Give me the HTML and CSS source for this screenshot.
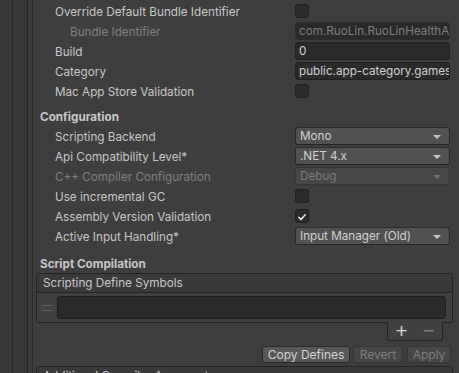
FILE: index.html
```html
<!doctype html>
<html>
<head>
  <title>Player Settings</title>
  <meta charset='UTF-8'>
  <link rel="stylesheet" href="styles.css">
</head>
<body>
  <div class="rail"></div>
  <div class="rail rail-inner"></div>
  <div class="gutter"></div>
  <main>
    <div class="row">
      <span class="label">Override Default Bundle Identifier</span>
      <span class="check"></span>
    </div>
    <div class="row">
      <span class="label sub off">Bundle Identifier</span>
      <span class="text off">com.RuoLin.RuoLinHealthApp</span>
    </div>
    <div class="row">
      <span class="label">Build</span>
      <span class="text">0</span>
    </div>
    <div class="row">
      <span class="label">Category</span>
      <span class="text">public.app-category.games</span>
    </div>
    <div class="row">
      <span class="label">Mac App Store Validation</span>
      <span class="check"></span>
    </div>

    <h3 class="first">Configuration</h3>
    <div class="row">
      <span class="label">Scripting Backend</span>
      <span class="drop">Mono</span>
    </div>
    <div class="row">
      <span class="label">Api Compatibility Level*</span>
      <span class="drop">.NET 4.x</span>
    </div>
    <div class="row">
      <span class="label off">C++ Compiler Configuration</span>
      <span class="drop off">Debug</span>
    </div>
    <div class="row">
      <span class="label">Use incremental GC</span>
      <span class="check"></span>
    </div>
    <div class="row">
      <span class="label">Assembly Version Validation</span>
      <span class="check on">
        <svg viewBox="0 0 14 14" width="14" height="14"><path d="M3.3 7.3 L5.9 9.8 L10.7 4.3" fill="none" stroke="#f0f0f0" stroke-width="1.7" stroke-linecap="round" stroke-linejoin="round"/></svg>
      </span>
    </div>
    <div class="row">
      <span class="label">Active Input Handling*</span>
      <span class="drop">Input Manager (Old)</span>
    </div>

    <h3>Script Compilation</h3>
    <div class="list">
      <div class="list-head">Scripting Define Symbols</div>
      <div class="list-body">
        <span class="handle"></span>
        <span class="list-input"></span>
      </div>
    </div>
    <div class="list-foot">
      <span class="plus">+</span>
      <span class="minus">&minus;</span>
    </div>
    <div class="actions">
      <span class="btn btn-copy">Copy Defines</span>
      <span class="btn btn-revert off">Revert</span>
      <span class="btn btn-apply off">Apply</span>
    </div>
    <div class="list next">
      <div class="list-head">Additional Compiler Arguments</div>
    </div>
  </main>
</body>
</html>
```

FILE: styles.css
```css
html, body { height: 100% }
body {
  margin: 0;
  display: flex;
  overflow: hidden;
  background: #383838;
  color: #c8c8c8;
  font: 11.7px/20px Inter, 'Noto Sans', sans-serif }
.rail {
  width: 12px;
  flex: none;
  border-right: 1px solid #242424 }
  .rail-inner { width: 14px }
.gutter {
  width: 4px;
  flex: none;
  background: #3c3c3c;
  border-right: 1px solid #2c2c2c }
main {
  flex: 1;
  background: #3e3e3e;
  padding: 1px 0 0 3px;
  min-width: 0 }
  .row {
    display: grid;
    grid-template-columns: 240px 155px;
    align-items: center;
    height: 20px;
    padding-left: 19px }
    .label {
      white-space: nowrap;
      overflow: hidden;
      padding-top: 1px }
    .sub { padding-left: 15px }
    .off { color: #7f7f7f }
  .check {
    width: 12px;
    height: 12px;
    border: 1px solid #1f1f1f;
    border-radius: 3px;
    background: #2b2b2b;
    display: flex }
  .text, .drop {
    height: 16px;
    line-height: 17px;
    border: 1px solid #212121;
    border-radius: 3px;
    padding: 0 0 0 3px;
    white-space: nowrap;
    overflow: hidden;
    color: #d2d2d2;
    background: #2a2a2a }
    .text.off { color: #7f7f7f; border-color: #2e2e2e }
  .drop {
    position: relative;
    padding-left: 4px;
    background: #515151;
    border-color: #2b2b2b;
    border-bottom-color: #242424 }
    .drop::after {
      content: "";
      position: absolute;
      right: 8px;
      top: 7px;
      border: 4px solid transparent;
      border-top: 4px solid #c4c4c4;
      border-bottom: 0 }
    .drop.off {
      background: #464646;
      border-color: #373737;
      color: #7a7a7a }
      .drop.off::after { border-top-color: #6e6e6e }
  h3 {
    margin: 7px 0 0 4px;
    height: 20px;
    padding-top: 1px;
    box-sizing: border-box;
    font-size: 11.7px;
    font-weight: bold;
    color: #c8c8c8 }
    h3.first { margin-top: 5px }
  .list {
    margin: 0 6px 0 0;
    border: 1px solid #242424;
    border-radius: 3px;
    overflow: hidden }
    .list-head {
      height: 18px;
      line-height: 19px;
      padding-left: 6px;
      background: #3a3a3a;
      border-bottom: 1px solid #242424 }
    .list-body {
      display: flex;
      align-items: center;
      gap: 4px;
      height: 29px;
      padding: 0 6px 0 5px;
      background: #414141 }
    .handle {
      width: 10px;
      height: 4px;
      border-top: 1px solid #5c5c5c;
      border-bottom: 1px solid #5c5c5c;
      flex: none;
      margin-right: 1px }
    .list-input {
      flex: 1;
      height: 21px;
      border: 1px solid #1f1f1f;
      border-radius: 3px;
      background: #2a2a2a }
  .list-foot {
    margin: -1px 16px 0 auto;
    width: 54px;
    height: 18px;
    border: 1px solid #242424;
    border-top: 0;
    border-radius: 0 0 3px 3px;
    background: #414141;
    display: flex;
    justify-content: space-around;
    align-items: center;
    font: 16px/18px 'DejaVu Sans', sans-serif;
    color: #d8d8d8 }
    .minus { color: #7c7c7c }
  .actions {
    display: flex;
    justify-content: flex-end;
    gap: 3px;
    margin: 5px 8px 0 0 }
    .btn {
      height: 15px;
      line-height: 16px;
      text-align: center;
      border: 1px solid #2a2a2a;
      border-radius: 3px;
      background: #585858;
      color: #d4d4d4;
      font-size: 12px }
      .btn.off {
        background: #464646;
        border-color: #363636;
        color: #7e7e7e }
      .btn-copy { width: 86px }
      .btn-revert { width: 48px }
      .btn-apply { width: 42px; margin-left: 1px }
  .next { margin-top: 3px }
```
